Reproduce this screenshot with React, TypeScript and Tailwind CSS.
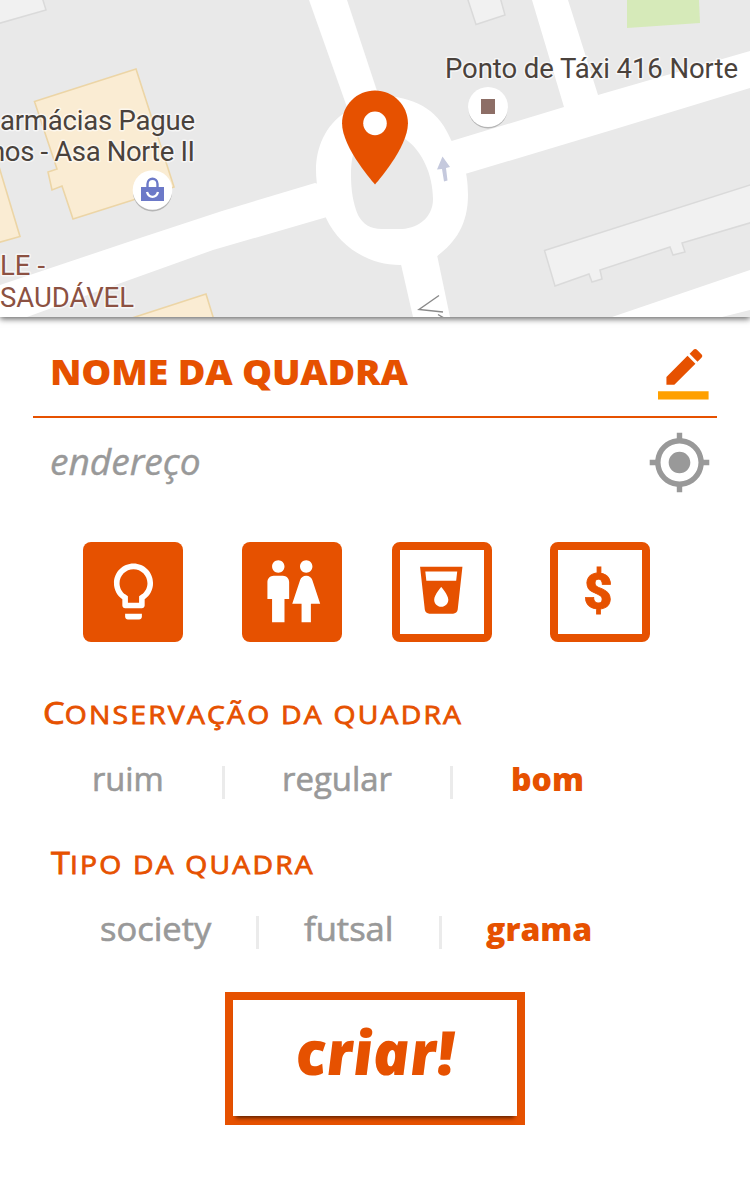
import React from "react";

const LABEL = "Roboto, 'Liberation Sans', sans-serif";

function MapLabel({ x, y, width, color, children }: { x: number; y: number; width: number; color: string; children: string }) {
  return (
    <text
      x={x}
      y={y}
      textLength={width}
      fontFamily={LABEL}
      fontSize="27.5"
      fill={color}
      stroke="#ffffff"
      strokeOpacity="0.6"
      strokeWidth="3"
      strokeLinejoin="round"
      paintOrder="stroke"
    >
      {children}
    </text>
  );
}

function StreetMap() {
  return (
    <svg className="block h-[317px] w-full" viewBox="0 0 750 317">
      <rect width="750" height="317" fill="#e9e9e9" />
      <g fill="#f1f1f1" stroke="#dadada" strokeWidth="1.5">
        <path d="M-3-3H42L46 10L-3 24Z" />
        <path d="M467-3L476 24.500L505 15L500-3Z" />
        <path d="M544.500 250.500L753 184V222L682 243L685 252L673 255L670 247L600 270L602 279L592 282L589 274L555 286Z" />
      </g>
      <path d="M627 0H699L700 23L627 28Z" fill="#d6eab9" />
      <g fill="#faecd3" stroke="#ecd5a6" strokeWidth="1.6">
        <path d="M34.500 101.500L136 69L174 187L73 219L62 186L52 190L48 172L57 169Z" />
        <path d="M-3 160L20 236.500L-3 243Z" />
        <path d="M132 318L206 294L214 320Z" />
      </g>
      <g fill="#ffffff">
        <path d="M309 0H347L380 100L348 110Z" />
        <path d="M0 285L143 237L222 211L315 183L340 190L327 217L213 250L93 293L27 317H0Z" />
        <path d="M445 143L564 107L532 0H568L598 95L750 51V88L612 130L465 174L445 180Z" />
        <path d="M400 260L413 317H450L436 250Z" />
        <path d="M612 317L750 270V310L722 317Z" />
        <path d="M346 112C325 125 316 148 316 170C316 185 320 205 326 218C340 248 370 265 400 265C412 264 425 262 436 257C455 243 468 225 468 195C468 170 462 155 451 140C440 113 420 98 385 96Z" />
      </g>
      <path d="M362 136C353 148 351 160 351 175C351 190 353 203 358 215C363 224 370 229 382 229H402C420 228 433 216 433 199C433 175 422 150 405 139C393 131 372 130 362 136Z" fill="#e9e9e9" />
      <path d="M442.500 156.500L450 167L446 168L447.500 180.500L444 181.500L442 169L437 169.500Z" fill="#c5c9dd" />
      <path d="M439 295.500L419 309.500L443 312M438 314.500L444 318" fill="none" stroke="#8a8a8a" strokeWidth="1.4" />

      <circle cx="152.500" cy="192" r="19.500" fill="#b5b5b5" />
      <circle cx="152.500" cy="190" r="19.800" fill="#ffffff" />
      <path d="M141 187H164V201H141Z" fill="#6c79c8" />
      <path d="M147.500 188V184C147.500 177 157.500 177 157.500 184V188" fill="none" stroke="#6c79c8" strokeWidth="2.400" />
      <path d="M147 192C149 198.500 156 198.500 158 192" fill="none" stroke="#ffffff" strokeWidth="2.400" />

      <circle cx="488" cy="109" r="19.500" fill="#b5b5b5" />
      <circle cx="488" cy="107" r="20" fill="#ffffff" />
      <rect x="481" y="99" width="14" height="15" fill="#8d6e66" />

      <MapLabel x={0} y={130} width={195} color="#4a423c">armácias Pague</MapLabel>
      <MapLabel x={-10} y={161} width={205} color="#4a423c">nos - Asa Norte II</MapLabel>
      <MapLabel x={445} y={78} width={293} color="#4a423c">Ponto de Táxi 416 Norte</MapLabel>
      <MapLabel x={0} y={275} width={45} color="#8c5142">LE -</MapLabel>
      <MapLabel x={0} y={307} width={134} color="#8c5142">SAUDÁVEL</MapLabel>

      <g transform="translate(318.500 81) scale(4.708)">
        <path d="M12 2C8.130 2 5 5.130 5 9c0 5.250 7 13 7 13s7-7.750 7-13c0-3.870-3.130-7-7-7z" fill="#e65100" />
        <circle cx="12" cy="9" r="2.500" fill="#ffffff" />
      </g>
    </svg>
  );
}

function Amenity({ active, label, children }: { active: boolean; label: string; children: React.ReactNode }) {
  return (
    <button
      aria-label={label}
      aria-pressed={active}
      className={
        active
          ? "flex size-[100px] items-center justify-center rounded-[8px] bg-[#e65100] text-white"
          : "flex size-[100px] items-center justify-center rounded-[8px] border-8 border-[#e65100] bg-white text-[#e65100]"
      }
    >
      {children}
    </button>
  );
}

function Divider() {
  return <span className="mt-[8px] h-[33px] w-[3px] shrink-0 bg-[#ebebeb]" />;
}

export default function App() {
  return (
    <main className="flex h-[1183px] w-[750px] flex-col overflow-hidden bg-white font-['Open_Sans','Noto_Sans',sans-serif] text-[#999999]">
      <header className="h-[317px] shrink-0 shadow-[0_2px_6px_0_rgba(0,0,0,0.6)]">
        <StreetMap />
      </header>

      <div className="ml-[33px] flex h-[101px] w-[684px] shrink-0 items-start justify-between border-b-2 border-[#e65100] pr-[8px] pl-[17px]">
        <h1 className="mt-[30px] origin-left scale-x-[1.08] text-[35px] leading-[50px] font-extrabold tracking-[-0.2px] whitespace-nowrap text-[#e65100]">
          NOME DA QUADRA
        </h1>
        <svg className="mt-[32.400px] size-[50.600px]" viewBox="0 0 24 24">
          <path fill="#e65100" d="M17.750 7L14 3.250l-10 10V17h3.750l10-10zm2.960-2.960c.39-.39.39-1.020 0-1.410L18.370.29c-.39-.39-1.020-.39-1.410 0L15 2.250 18.750 6l1.960-1.960z" />
          <path fill="#ffa000" d="M0 20h24v4H0z" />
        </svg>
      </div>

      <div className="flex h-[90px] shrink-0 items-center justify-between pr-[38px] pl-[50px]">
        <span className="-mt-[2px] origin-left scale-x-[1.03] text-[36px] leading-[50px] italic [-webkit-text-stroke:0.4px_#999999]">endereço</span>
        <svg className="-mt-px size-[65px]" viewBox="0 0 24 24" fill="#999999">
          <path d="M12 8c-2.210 0-4 1.790-4 4s1.790 4 4 4 4-1.790 4-4-1.790-4-4-4zm8.940 3c-.46-4.170-3.770-7.480-7.940-7.940V1h-2v2.060C6.830 3.520 3.520 6.830 3.060 11H1v2h2.060c.46 4.170 3.770 7.480 7.940 7.940V23h2v-2.060c4.170-.46 7.480-3.770 7.940-7.940H23v-2h-2.060zM12 19c-3.870 0-7-3.130-7-7s3.130-7 7-7 7 3.130 7 7-3.130 7-7 7z" />
        </svg>
      </div>

      <div className="mt-[33.600px] flex h-[100px] shrink-0 pl-[83.300px]">
        <Amenity active label="Iluminação">
          <svg className="size-[67px]" viewBox="0 0 24 24" fill="currentColor">
            <path d="M9 21c0 .55.45 1 1 1h4c.55 0 1-.45 1-1v-1H9v1zm3-19C8.140 2 5 5.140 5 9c0 2.380 1.190 4.470 3 5.740V17c0 .55.45 1 1 1h6c.55 0 1-.45 1-1v-2.260c1.810-1.270 3-3.360 3-5.740 0-3.860-3.140-7-7-7zm2.850 11.100l-.85.6V16h-4v-2.300l-.85-.6C7.800 12.160 7 10.630 7 9c0-2.760 2.240-5 5-5s5 2.240 5 5c0 1.630-.8 3.160-2.150 4.100z" />
          </svg>
        </Amenity>
        <div className="ml-[58.300px]">
          <Amenity active label="Banheiros">
            <svg className="ml-[2px] size-[74.500px]" viewBox="0 0 24 24" fill="currentColor">
              <path d="M5.500 22v-7.500H4V9c0-1.100.9-2 2-2h3c1.100 0 2 .9 2 2v5.500H9.500V22h-4zM18 22v-6h3l-2.540-7.630C18.180 7.550 17.420 7 16.560 7h-.12c-.86 0-1.630.55-1.900 1.370L12 16h3v6h3zM7.500 6c1.110 0 2-.89 2-2s-.89-2-2-2-2 .89-2 2 .89 2 2 2zm9 0c1.110 0 2-.89 2-2s-.89-2-2-2-2 .89-2 2 .89 2 2 2z" />
            </svg>
          </Amenity>
        </div>
        <div className="ml-[50px]">
          <Amenity active={false} label="Bebedouro">
            <svg className="mb-[3px] size-[56.500px] shrink-0" viewBox="0 0 24 24" fill="currentColor">
              <path d="M3 2l2.010 18.230C5.130 21.230 5.970 22 7 22h10c1.030 0 1.870-.77 1.990-1.770L21 2H3zm9 17c-1.660 0-3-1.340-3-3 0-2 3-5.400 3-5.400s3 3.400 3 5.400c0 1.660-1.340 3-3 3zm6.330-11H5.670l-.44-4h13.550l-.45 4z" />
            </svg>
          </Amenity>
        </div>
        <div className="ml-[58.400px]">
          <Amenity active={false} label="Pago">
            <span className="-ml-[4px] pt-px font-[Roboto,sans-serif] text-[50px] leading-[60px] font-black [-webkit-text-stroke:0.8px_#e65100]">$</span>
          </Amenity>
        </div>
      </div>

      <h2 className="mt-[45.400px] ml-[43px] h-[50px] w-fit shrink-0 origin-left scale-x-[1.11] text-[31px] leading-[50px] font-medium whitespace-nowrap text-[#e65100] [-webkit-text-stroke:0.8px_#e65100]">
        C<span className="text-[25.500px] tracking-[2px]">ONSERVAÇÃO DA QUADRA</span>
      </h2>
      <div className="mt-[21px] flex h-[42px] shrink-0 pl-[92px] text-[32px] leading-[42px]">
        <span className="w-[130px] origin-left scale-x-[1.02] [-webkit-text-stroke:0.6px_#999999]">ruim</span>
        <Divider />
        <span className="ml-[57px] w-[168px] origin-left scale-x-[1.028] [-webkit-text-stroke:0.6px_#999999]">regular</span>
        <Divider />
        <span className="pl-[58px] font-extrabold text-[#e65100]">bom</span>
      </div>

      <h2 className="mt-[37px] ml-[51px] h-[50px] w-fit shrink-0 origin-left scale-x-[1.108] text-[31px] leading-[50px] font-medium whitespace-nowrap text-[#e65100] [-webkit-text-stroke:0.8px_#e65100]">
        T<span className="text-[25.500px] tracking-[2px]">IPO DA QUADRA</span>
      </h2>
      <div className="mt-[21px] flex h-[42px] shrink-0 pl-[99px] text-[32px] leading-[42px]">
        <span className="-ml-px w-[158px] origin-left translate-x-[2px] scale-x-[1.077] [-webkit-text-stroke:0.6px_#999999]">society</span>
        <Divider />
        <span className="ml-[45px] w-[135px] origin-left scale-x-[1.08] [-webkit-text-stroke:0.6px_#999999]">futsal</span>
        <Divider />
        <span className="pl-[44px] font-extrabold text-[#e65100]">grama</span>
      </div>

      <button className="mt-[41.600px] ml-[225px] h-[133px] w-[300px] shrink-0 overflow-hidden bg-[#e65100] p-[8.400px] pb-[8.400px]">
        <span className="flex h-full items-center justify-center bg-white pb-[12px] text-[61px] leading-[70px] font-extrabold text-[#e65100] italic shadow-[0_5px_4px_-3px_rgba(0,0,0,0.6)]">
          <span className="inline-block skew-x-[5deg]">criar!</span>
        </span>
      </button>
    </main>
  );
}
